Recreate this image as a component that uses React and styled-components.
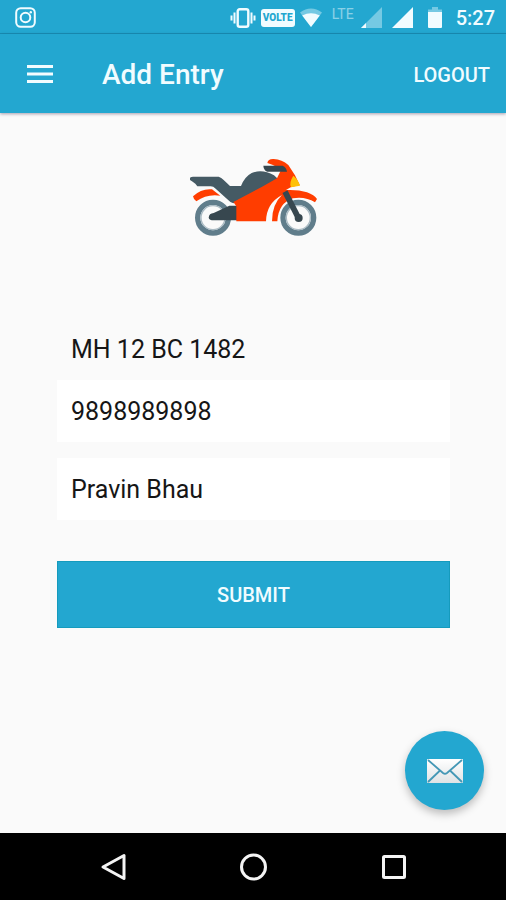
import React from 'react';
import styled, { createGlobalStyle } from 'styled-components';

const colors = {
  primary: '#23a7d0',
  primaryDark: '#178fb5',
  primaryEdge: '#159bbd',
  background: '#fafafa',
  text: '#161616',
  light: '#f1fcff',
};

const GlobalStyle = createGlobalStyle`
  * {
    box-sizing: border-box;
  }

  body {
    margin: 0;
    background: ${colors.background};
    font-family: Roboto, 'Liberation Sans', sans-serif;
  }

  svg {
    display: block;
    flex: none;
  }
`;

const AppStyled = styled.div`
  display: flex;
  flex-direction: column;
  min-height: 100vh;
`;

const StatusBar = styled.div`
  display: flex;
  align-items: center;
  justify-content: space-between;
  height: 34px;
  padding: 2px 11px 0 15px;
  background: ${colors.primary};
  border-bottom: 1px solid ${colors.primaryDark};
  color: ${colors.light};
`;

const StatusIcons = styled.div`
  display: flex;
  align-items: center;
  gap: ${({ $wide }) => ($wide ? '10px' : '5px')};
`;

const Volte = styled.span`
  width: 34px;
  height: 18px;
  border-radius: 3px;
  background: ${colors.light};
  color: ${colors.primary};
  font-size: 10px;
  font-weight: 900;
  line-height: 18px;
  text-align: center;
`;

const Lte = styled.span`
  align-self: flex-start;
  padding-right: 2px;
  font-size: 14px;
  line-height: 14px;
  opacity: 0.5;
`;

const Battery = styled.div`
  padding: 0 4px 0 5px;
`;

const Clock = styled.time`
  font-size: 20px;
  font-weight: 500;
  line-height: 24px;
`;

const Header = styled.header`
  position: relative;
  display: flex;
  align-items: center;
  height: 79px;
  padding: 2px 16px 0 26px;
  background: ${colors.primary};
  box-shadow: 0 1px 3px rgba(40, 20, 60, 0.4);
  color: ${colors.light};

  h1 {
    flex: 1;
    margin: 0 0 0 48px;
    font-size: 28px;
    font-weight: 500;
    line-height: 32px;
  }
`;

const BarButton = styled.button`
  padding: 0;
  border: 0;
  background: none;
  color: inherit;
  font: 500 20px/24px Roboto, sans-serif;
  cursor: pointer;
`;

const Main = styled.main`
  position: relative;
  flex: 1;
  padding: 45px 56px 96px 57px;

  > svg {
    margin: 0 auto;
  }
`;

const Form = styled.form`
  display: flex;
  flex-direction: column;
  margin-top: 80px;
`;

const Field = styled.input`
  width: 100%;
  height: 62px;
  margin-bottom: ${({ $plain }) => ($plain ? '0' : '16px')};
  padding: 0 14px;
  border: 0;
  border-radius: 0;
  background: ${({ $plain }) => ($plain ? 'transparent' : '#fff')};
  color: ${colors.text};
  font: 400 25px/32px Roboto, sans-serif;
`;

const SubmitButton = styled.button`
  height: 67px;
  margin-top: 25px;
  border: 1px solid ${colors.primaryEdge};
  background: ${colors.primary};
  color: ${colors.light};
  font: 500 20px/24px Roboto, sans-serif;
  cursor: pointer;
`;

const MailButton = styled.button`
  position: absolute;
  right: 22px;
  bottom: 23px;
  display: flex;
  align-items: center;
  justify-content: center;
  width: 79px;
  height: 79px;
  padding: 0;
  border: 0;
  border-radius: 50%;
  background: ${colors.primary};
  box-shadow: 0 4px 8px rgba(0, 0, 0, 0.25);
  cursor: pointer;
`;

const NavBar = styled.nav`
  display: flex;
  align-items: center;
  justify-content: center;
  gap: 112px;
  height: 67px;
  background: #000;
  color: #f4f4f4;
`;

const InstagramIcon = () => (
  <svg width="21" height="21" viewBox="0 0 21 21" fill="none" stroke="currentColor" strokeWidth="2">
    <rect x="1.2" y="1.2" width="18.6" height="18.6" rx="4.5" />
    <circle cx="10.5" cy="10.5" r="4.8" />
    <circle cx="15.8" cy="5.2" r="1.2" fill="currentColor" stroke="none" />
  </svg>
);

const VibrateIcon = () => (
  <svg width="26" height="20" viewBox="0 0 26 20" fill="none" stroke="currentColor" strokeWidth="2">
    <rect x="7.7" y="1.2" width="10.6" height="17.6" rx="2" strokeWidth="2.4" />
    <path d="M4.500 4.500v11M21.500 4.500v11M1.500 7.500v5M24.500 7.500v5" />
  </svg>
);

const WifiIcon = () => (
  <svg width="22" height="20" viewBox="0 0 22 20" fill="currentColor">
    <path d="M0 4.5Q11-3.5 22 4.5L11 19z" opacity="0.4" />
    <path d="M2.200 7.500Q11 2.800 19.800 7.500L11 19z" />
  </svg>
);

const SignalIcon = ({ weak }) => (
  <svg width="21" height="21" viewBox="0 0 21 21" fill="currentColor">
    <path d="M0 21L21 0v21z" opacity={weak ? 0.4 : 1} />
    {weak && <path d="M0 21l5-5v5z" />}
  </svg>
);

const BatteryIcon = () => (
  <svg width="14" height="21" viewBox="0 0 14 21" fill="currentColor">
    <path d="M0 5V2.5h4V0h6v2.5h4V5z" opacity="0.4" />
    <path d="M0 5h14v15q0 1-1 1H1q-1 0-1-1z" />
  </svg>
);

const MenuIcon = () => (
  <svg width="28" height="22" viewBox="0 0 28 22" stroke="currentColor" strokeWidth="3">
    <path d="M1 2.500h26M1 10h26M1 17.500h26" />
  </svg>
);

const Motorcycle = () => (
  <svg width="130" height="80" viewBox="25 38 390 240" fill="none" role="img" aria-label="Motorcycle">
    <g stroke="#607d8b" strokeWidth="16">
      <circle cx="97" cy="217" r="46" fill="#fafafa" />
      <circle cx="353" cy="217" r="46" fill="#fafafa" />
    </g>
    <circle cx="97" cy="217" r="36" stroke="#a9bac3" strokeWidth="4" />
    <circle cx="353" cy="217" r="36" stroke="#a9bac3" strokeWidth="4" />
    <path d="M37 153Q62 129 94 132L119 151Q78 145 47 168Q39 164 37 153z" fill="#ff3d00" />
    <path d="M84 217Q85 204 99 203L146 181L178 181L172 225H99Q86 225 84 217z" fill="#37474f" />
    <path
      d="M28 97Q32 94 37 94H114Q122 97 129 104L148 122H181Q192 94 213 83Q245 70 280 90L301 109L158 174Q148 171 140 162L105 130Q98 123 90 123H50L44 115Q34 108 28 104z"
      fill="#455a64"
    />
    <path
      d="M260 53Q262 40 279 41Q304 43 323 59L343 90L357 119L330 126L316 134Q352 132 379 141Q401 149 409 161L403 171Q374 153 337 159Q293 173 290 228H274Q274 177 304 149Q257 174 256 228H167V183L158 170L243 125L289 99L302 72L275 58z"
      fill="#ff3d00"
    />
    <path d="M248 61H306Q317 65 319 79H260Q249 75 248 61z" fill="#37474f" />
    <path d="M338 91Q353 103 358 121L331 126Q324 113 338 91z" fill="#ffc107" />
    <path d="M313 139L354 219" stroke="#37474f" strokeWidth="17" />
    <circle cx="354" cy="218" r="12" fill="#37474f" />
  </svg>
);

const MailIcon = () => (
  <svg width="36" height="24" viewBox="0 0 36 24" fill="none">
    <defs>
      <linearGradient id="paper" x2="0" y2="1">
        <stop stopColor="#fff" />
        <stop offset="1" stopColor="#dfe3e5" />
      </linearGradient>
    </defs>
    <rect width="36" height="24" rx="1" fill="url(#paper)" />
    <path
      d="M1 1L16 14Q18 15.500 20 14L35 1M1 23L13 11.500M35 23L23 11.500"
      stroke="#4498b6"
      strokeWidth="1.8"
    />
  </svg>
);

const BackIcon = () => (
  <svg width="28" height="28" viewBox="0 0 28 28" fill="none" stroke="currentColor" strokeWidth="3">
    <path d="M4 14L25 2.500v23z" strokeLinejoin="round" />
  </svg>
);

const HomeIcon = () => (
  <svg width="28" height="28" viewBox="0 0 28 28" fill="none" stroke="currentColor" strokeWidth="3">
    <circle cx="14.500" cy="14" r="12" />
  </svg>
);

const RecentIcon = () => (
  <svg width="28" height="28" viewBox="0 0 28 28" fill="none" stroke="currentColor" strokeWidth="3">
    <rect x="4.500" y="3.500" width="21" height="21" rx="1" />
  </svg>
);

export default () => (
  <AppStyled>
    <GlobalStyle />
    <StatusBar>
      <InstagramIcon />
      <StatusIcons $wide>
        <StatusIcons>
          <VibrateIcon />
          <Volte>VOLTE</Volte>
          <WifiIcon />
        </StatusIcons>
        <StatusIcons>
          <Lte>LTE</Lte>
          <SignalIcon weak />
        </StatusIcons>
        <SignalIcon />
        <Battery>
          <BatteryIcon />
        </Battery>
        <Clock>5:27</Clock>
      </StatusIcons>
    </StatusBar>
    <Header>
      <BarButton type="button" aria-label="Menu">
        <MenuIcon />
      </BarButton>
      <h1>Add Entry</h1>
      <BarButton type="button">LOGOUT</BarButton>
    </Header>
    <Main>
      <Motorcycle />
      <Form onSubmit={e => e.preventDefault()}>
        <Field $plain aria-label="Vehicle number" defaultValue="MH 12 BC 1482" />
        <Field type="tel" aria-label="Phone number" defaultValue="9898989898" />
        <Field aria-label="Name" defaultValue="Pravin Bhau" />
        <SubmitButton type="submit">SUBMIT</SubmitButton>
      </Form>
      <MailButton type="button" aria-label="Send mail">
        <MailIcon />
      </MailButton>
    </Main>
    <NavBar>
      <BarButton type="button" aria-label="Back">
        <BackIcon />
      </BarButton>
      <BarButton type="button" aria-label="Home">
        <HomeIcon />
      </BarButton>
      <BarButton type="button" aria-label="Recent apps">
        <RecentIcon />
      </BarButton>
    </NavBar>
  </AppStyled>
);
